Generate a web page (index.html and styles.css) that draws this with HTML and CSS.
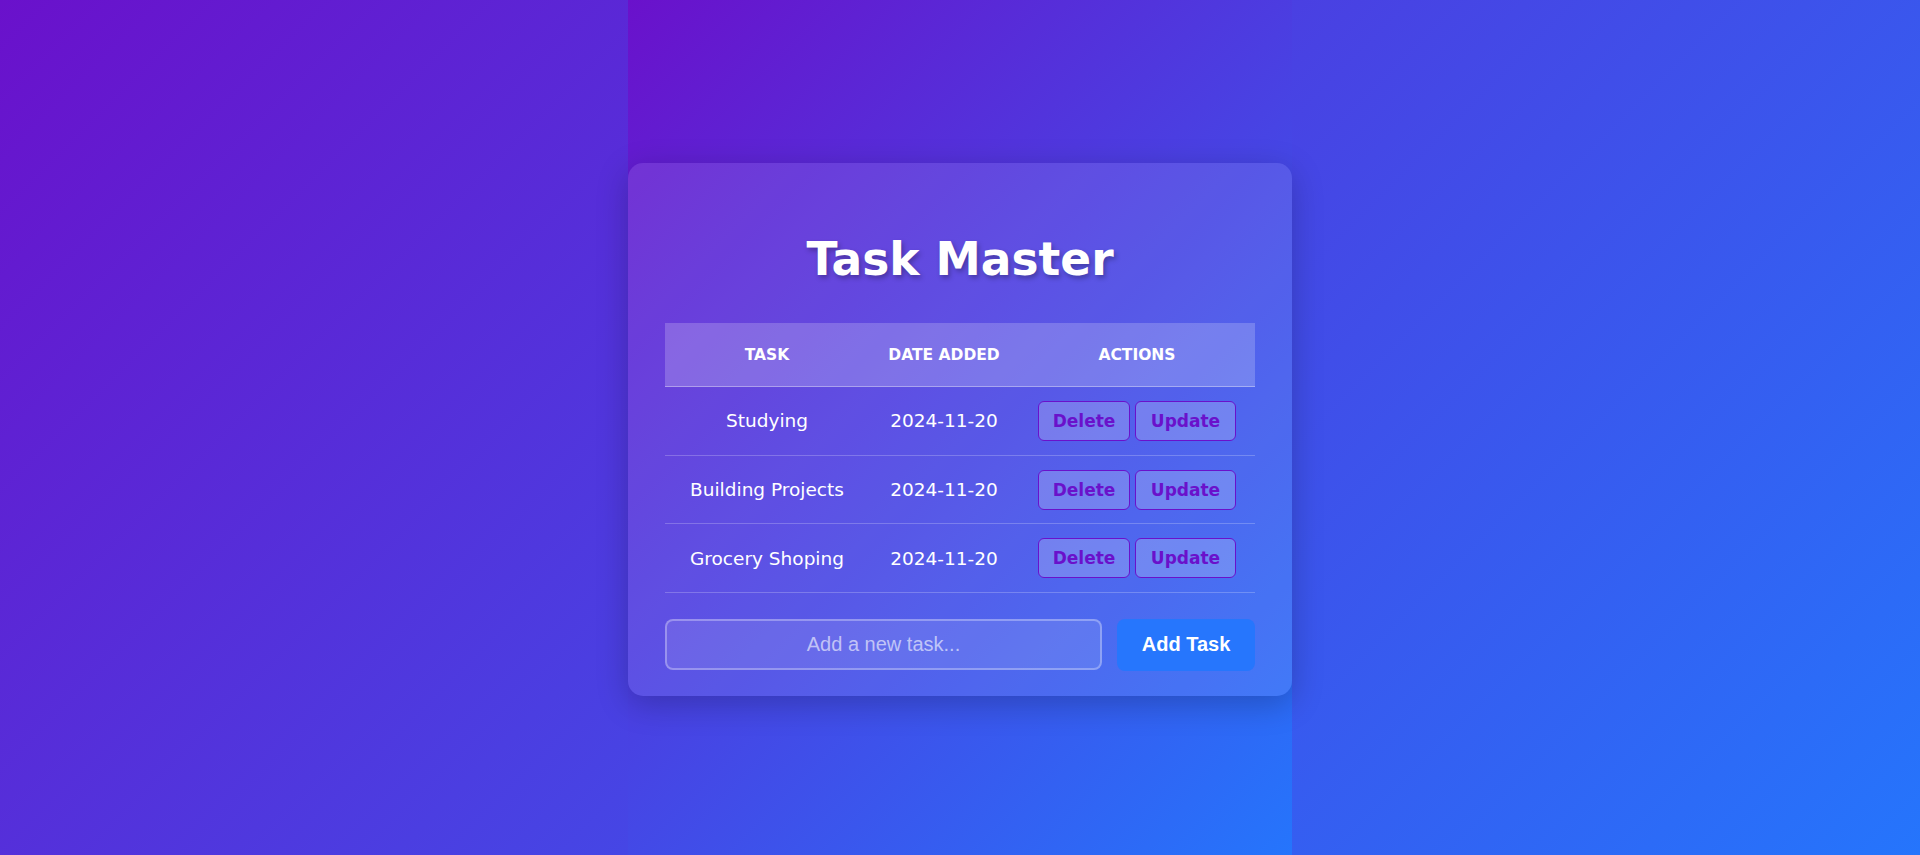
FILE: index.html
```html
<!DOCTYPE html>
<html lang="en">
<head>
<meta charset="utf-8">
<title>Task Master</title>
<link rel="stylesheet" href="styles.css">
</head>
<body>
<div class="page">
  <main class="card">
    <h1 class="title">Task Master</h1>
    <table class="tasks">
      <colgroup>
        <col class="col-task">
        <col class="col-date">
        <col class="col-actions">
      </colgroup>
      <thead>
        <tr><th>Task</th><th>Date Added</th><th>Actions</th></tr>
      </thead>
      <tbody>
        <tr>
          <td>Studying</td>
          <td>2024-11-20</td>
          <td class="actions"><button class="btn-row">Delete</button><button class="btn-row">Update</button></td>
        </tr>
        <tr>
          <td>Building Projects</td>
          <td>2024-11-20</td>
          <td class="actions"><button class="btn-row">Delete</button><button class="btn-row">Update</button></td>
        </tr>
        <tr>
          <td>Grocery Shoping</td>
          <td>2024-11-20</td>
          <td class="actions"><button class="btn-row">Delete</button><button class="btn-row">Update</button></td>
        </tr>
      </tbody>
    </table>
    <form class="add-form">
      <input class="add-input" type="text" placeholder="Add a new task...">
      <button class="add-btn" type="button">Add Task</button>
    </form>
  </main>
</div>
</body>
</html>
```

FILE: styles.css
```css
html, body {
  margin: 0;
  padding: 0;
}

body {
  height: 100vh;
  background: linear-gradient(135deg, #6a11cb 0%, #2575fc 100%);
  display: flex;
  justify-content: center;
  font-family: "DejaVu Sans", "Open Sans", sans-serif;
  color: #ffffff;
}

.page {
  box-sizing: border-box;
  width: 664px;
  height: 100vh;
  padding-top: 4px;
  background: linear-gradient(135deg, #6a11cb 0%, #2575fc 100%);
  display: flex;
  align-items: center;
}

.card {
  box-sizing: border-box;
  width: 664px;
  padding: 25px 37px 25px;
  background: rgba(255, 255, 255, 0.1);
  border-radius: 15px;
  box-shadow: 0 8px 32px rgba(0, 0, 0, 0.22);
}

.title {
  margin: 44px 0 36px;
  font-size: 45.5px;
  line-height: 55px;
  font-weight: 700;
  text-align: center;
  letter-spacing: 0;
  text-shadow: 2px 3px 5px rgba(0, 0, 0, 0.28);
}

.tasks {
  width: 590px;
  border-collapse: collapse;
  table-layout: fixed;
}

.col-task { width: 204px; }
.col-date { width: 150px; }
.col-actions { width: 236px; }

.tasks th {
  height: 63px;
  padding: 0;
  background: rgba(255, 255, 255, 0.2);
  border-bottom: 1px solid rgba(255, 255, 255, 0.35);
  font-size: 15.5px;
  font-weight: 700;
  text-transform: uppercase;
  text-align: center;
}

.tasks td {
  height: 67.67px;
  padding: 0;
  border-bottom: 1px solid rgba(255, 255, 255, 0.22);
  font-size: 18.5px;
  text-align: center;
  white-space: nowrap;
}

.btn-row {
  box-sizing: border-box;
  height: 40px;
  margin: 0;
  padding: 0;
  background: rgba(255, 255, 255, 0.2);
  border: 1px solid #6a11cb;
  border-radius: 6px;
  color: #6a11cb;
  font-family: "DejaVu Sans", "Open Sans", sans-serif;
  font-size: 17px;
  font-weight: 700;
  vertical-align: middle;
}

.btn-row:first-child {
  width: 92px;
  margin-right: 5px;
}

.btn-row:last-child { width: 101px; }

.add-form {
  display: flex;
  gap: 15px;
  margin: 26px 0 0;
}

.add-input {
  box-sizing: border-box;
  flex: 1;
  height: 51px;
  padding: 0 12px;
  background: rgba(255, 255, 255, 0.1);
  border: 2px solid rgba(255, 255, 255, 0.3);
  border-radius: 8px;
  color: #ffffff;
  font-family: "Liberation Sans", Arial, sans-serif;
  font-size: 20px;
  text-align: center;
  outline: none;
}

.add-input::placeholder {
  color: rgba(255, 255, 255, 0.6);
}

.add-btn {
  box-sizing: border-box;
  width: 138px;
  height: 52px;
  padding: 0 24px;
  background: #2676fd;
  border: none;
  border-radius: 8px;
  color: #ffffff;
  font-family: "Liberation Sans", Arial, sans-serif;
  font-size: 20px;
  font-weight: 700;
}
```
